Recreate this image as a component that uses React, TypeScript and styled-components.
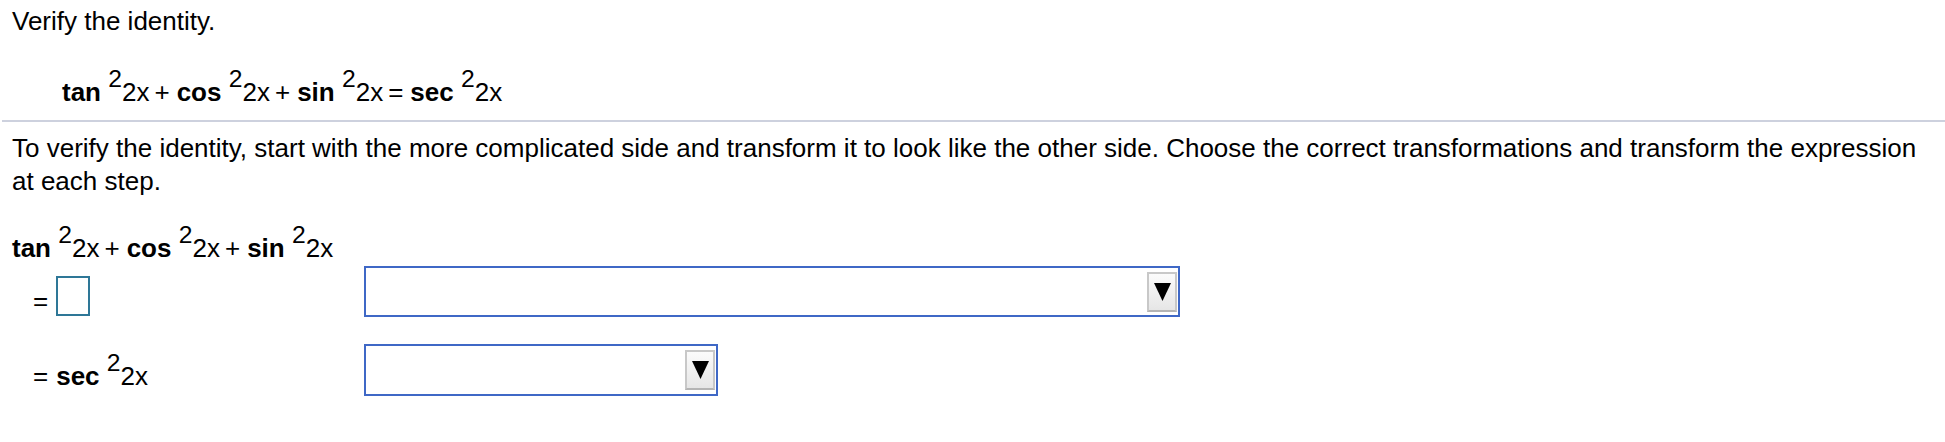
import React from "react";
import styled, { createGlobalStyle } from "styled-components";

const GlobalStyle = createGlobalStyle`
  html, body {
    margin: 0;
    padding: 0;
    background: #ffffff;
  }
  body {
    font-family: "Liberation Sans", Arial, Helvetica, sans-serif;
    color: #000000;
  }
`;

const Page = styled.div`
  width: 1945px;
  font-size: 26px;
`;

const Header = styled.div`
  padding: 6px 12px 0;
`;

const Title = styled.div`
  line-height: 30px;
`;

const Equation = styled.div`
  line-height: 30px;
  margin-top: 41px;
  padding-left: 50px;
  white-space: nowrap;
`;

const Divider = styled.div`
  height: 2px;
  margin: 13px 0 0 2px;
  background: #cdd1de;
`;

const Body = styled.div`
  padding: 0 12px;
`;

const Instructions = styled.p`
  margin: 10px 0 0;
  line-height: 33px;
`;

const Fn = styled.b`
  font-weight: bold;
  margin-right: 0.28em;
`;

const Sup = styled.span`
  font-size: 0.95em;
  line-height: 0;
  vertical-align: 14px;
`;

const Op = styled.span`
  margin-left: 5px;
  margin-right: 7px;
`;

const TermWrap = styled.span`
  white-space: nowrap;
`;

const StartLine = styled.div`
  line-height: 30px;
  margin-top: 35px;
  white-space: nowrap;
`;

const Steps = styled.div`
  display: grid;
  grid-template-columns: 352px auto;
  row-gap: 27px;
  margin-top: 3px;
  justify-items: start;
`;

const StepLeft = styled.div<{ $pad: number }>`
  display: flex;
  align-items: flex-end;
  padding: 0 0 ${(p) => p.$pad}px 21px;
  line-height: 30px;
  white-space: nowrap;
`;

const Eq = styled.span`
  margin-right: 8px;
`;

const AnswerBox = styled.div`
  width: 34px;
  height: 40px;
  box-sizing: border-box;
  border: 2px solid #2e7797;
  background: #ffffff;
`;

const Select = styled.div<{ $width: number; $height: number }>`
  width: ${(p) => p.$width}px;
  height: ${(p) => p.$height}px;
  box-sizing: border-box;
  border: 2px solid #3f68c6;
  background: #ffffff;
  display: flex;
  justify-content: flex-end;
  align-items: center;
  padding-right: 1px;
`;

const ArrowButton = styled.div`
  width: 30px;
  height: 40px;
  box-sizing: border-box;
  border: 2px solid #c8c8c8;
  border-bottom-color: #b4b4b4;
  background: linear-gradient(#fbfbfb, #e6e6e6);
  display: flex;
  align-items: center;
  justify-content: center;
`;

const Arrow = () => (
  <svg width="17" height="18" viewBox="0 0 17 18">
    <polygon points="0,0 17,0 8.5,18" fill="#000" />
  </svg>
);

const Dropdown: React.FC<{ width: number; height: number }> = ({ width, height }) => (
  <Select $width={width} $height={height}>
    <ArrowButton>
      <Arrow />
    </ArrowButton>
  </Select>
);

const Term: React.FC<{ fn: string }> = ({ fn }) => (
  <TermWrap>
    <Fn>{fn}</Fn>
    <Sup>2</Sup>2x
  </TermWrap>
);

const App: React.FC = () => {
  return (
    <Page>
      <GlobalStyle />
      <Header>
        <Title>Verify the identity.</Title>
        <Equation>
          <Term fn="tan" />
          <Op>+</Op>
          <Term fn="cos" />
          <Op>+</Op>
          <Term fn="sin" />
          <Op>=</Op>
          <Term fn="sec" />
        </Equation>
      </Header>
      <Divider />
      <Body>
        <Instructions>
          To verify the identity, start with the more complicated side and transform it to look like the other side.
          Choose the correct transformations and transform the expression at each step.
        </Instructions>
        <StartLine>
          <Term fn="tan" />
          <Op>+</Op>
          <Term fn="cos" />
          <Op>+</Op>
          <Term fn="sin" />
        </StartLine>
        <Steps>
          <StepLeft $pad={1}>
            <Eq>=</Eq>
            <AnswerBox />
          </StepLeft>
          <Dropdown width={816} height={51} />
          <StepLeft $pad={5}>
            <Eq>=</Eq>
            <Term fn="sec" />
          </StepLeft>
          <Dropdown width={354} height={52} />
        </Steps>
      </Body>
    </Page>
  );
};

export default App;
